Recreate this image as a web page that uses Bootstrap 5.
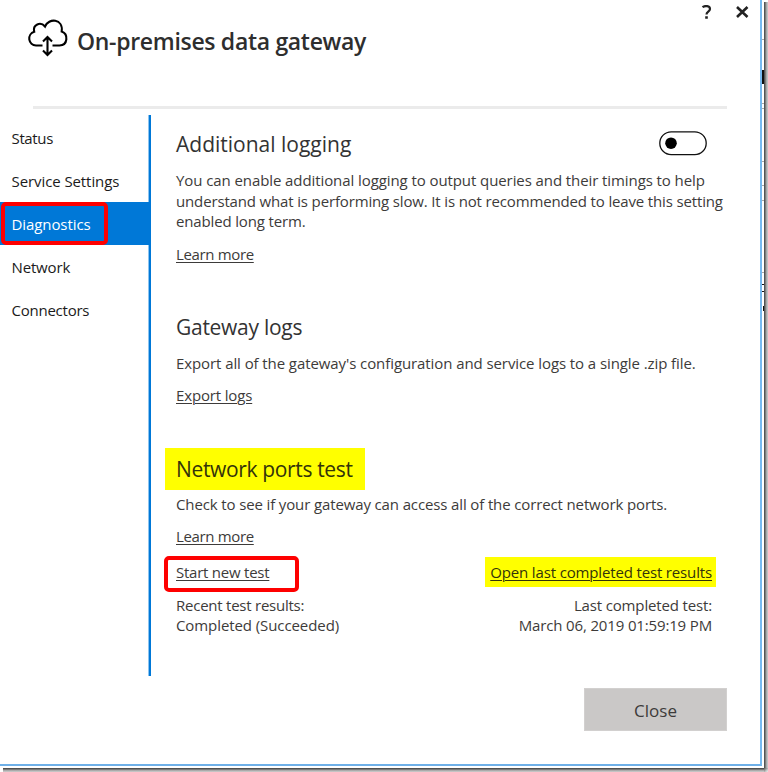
<!DOCTYPE html>
<html lang="en">
<head>
<meta charset="utf-8">
<meta name="viewport" content="width=device-width, initial-scale=1">
<title>On-premises data gateway</title>
<link href="https://cdn.jsdelivr.net/npm/bootstrap@5.3.0/dist/css/bootstrap.min.css" rel="stylesheet">
<style>
body{font-family:"Open Sans","Noto Sans",sans-serif;font-size:15px;line-height:20.7px;color:#3d3b3a;background:#fff;height:772px}
.gw-shell{width:768px;height:772px;display:grid;grid-template-columns:764px 4px;grid-template-rows:768px 4px}
.gw-window{width:762px;height:766px;border-right:2px solid #76b9f0;border-bottom:2px solid #6fb0e8}
.shade-right{margin-top:2px;background:linear-gradient(90deg,#4a4a4a 0,#5e5e5e 25%,#9c9c9c 50%,#b4b4b4 75%,#d0d0d0 100%)}
.shade-bottom{margin-left:3px;background:linear-gradient(#3c3c3c 0,#6a6a6a 30%,#a8a8a8 60%,#d0d0d0 100%)}
.shade-corner{background:linear-gradient(135deg,#555 0,#c4c4c4 60%,#eee 100%)}
.gw-head{height:106px}
.gw-logo{margin:17px 0 0 27px}
.gw-title{font-size:23px;font-weight:600;line-height:30px;letter-spacing:-.31px;margin:26px 0 0 8px;color:#2e2e2e}
.gw-tools{margin:5px 11px 0 0;gap:23px}
.gw-rule{height:2.5px;width:694px;margin-left:33px;background:#ebebeb}
.gw-main{margin-top:6.5px;height:561px}
.gw-side{width:151px;border-right:2px solid #0078d7;box-shadow:inset -1px 0 #8cc4f0;padding-top:1px}
.gw-side .nav-link{height:43px;padding:12px 0 0 11.5px;color:#1b1b1b;line-height:21px}
.gw-side .nav-link.active{background:#0078d7;color:#fff;position:relative}
.gw-side .active::after{content:"";position:absolute;left:1px;top:0;width:107px;height:43px;border:4px solid #fe0000;border-radius:5px}
.gw-body{width:551px;margin-left:25px;padding-top:14px}
.gw-h{font-size:21px;line-height:30px;height:30px;margin:0;color:#333;white-space:nowrap}
.gw-switch{margin:2px 20px 0 0}
.gw-text{margin:11px 0 0}
.gw-line{display:block;white-space:nowrap}
.gw-link{color:inherit;text-decoration:underline;text-decoration-thickness:1px;text-underline-offset:1.5px;white-space:nowrap}
.gw-row{margin-top:12px;height:21px}
.gw-export{margin-top:11px}
.gw-sect{margin-top:47px}
.gw-ports{margin-top:48px}
.gw-ports .gw-text{margin-top:10px}
.gw-ports .gw-row{margin-top:11px}
.hl{background:#ff0;color:#33330a}
.hl-head{padding:6px 11.5px;margin:-6px 0 -6px -11.5px;height:42px;width:200.5px}
.hl-link{padding:5px 4px 4px 5px;margin:-4px -4px -4px 0;height:30px}
.red-box{border:4px solid #fe0000;border-radius:5px;width:135px;height:36px;padding:2px 0 0 8px;margin:-5px 0 0 -12px}
.gw-results{width:536px}
.gw-actions{padding-top:14px;height:48px}
.gw-close{width:143px;height:43px;border:1px solid #d2d0cf;border-radius:0;background:#cac8c7;color:#3d3b3a;font-size:17px;padding:2px 0 0;margin:12px 33px 0 0}
.ls-0{letter-spacing:-.085px}.ls-c{letter-spacing:-.13px}.ls-1{letter-spacing:-.15px}.ls-2{letter-spacing:-.24px}.ls-3{letter-spacing:-.35px}.ls-g{letter-spacing:-.28px}
</style>
<script src="https://cdn.jsdelivr.net/npm/bootstrap@5.3.0/dist/js/bootstrap.bundle.min.js"></script>
</head>
<body class="overflow-hidden">
<div class="gw-shell">
  <div class="d-flex align-items-start">
    <div class="gw-window d-flex flex-column flex-shrink-0">
      <header class="gw-head d-flex align-items-start">
        <svg class="gw-logo" width="42" height="41" viewBox="0 0 42 41" fill="none" stroke="#000" stroke-width="2.1" aria-hidden="true">
          <path d="M15.500 28.500H9A7 7 0 0 1 7.200 14.800C5.500 7.500 13.500 4.200 18 9.500C21.500.7 36.500 1.500 34.700 14.500C41.500 17 41 28.500 32.500 28.500H25.500"/>
          <path d="M20.500 21V37M16 24.500L20.500 20L25 24.500M16 33.500L20.500 38L25 33.500"/>
        </svg>
        <h1 class="gw-title">On-premises data gateway</h1>
        <div class="gw-tools d-flex ms-auto">
          <svg width="11" height="15" viewBox="0 0 11 15" fill="none" stroke="#222" stroke-width="2.2" role="img" aria-label="Help"><path d="M1.500 2.200C4 .3 9 .7 9 4C9 6.700 5.500 6.700 5.500 9.500"/><path d="M4.200 12.500H6.800" stroke-width="2.500"/></svg>
          <svg width="14" height="15" viewBox="0 0 14 15" fill="none" stroke="#222" stroke-width="2.600" role="img" aria-label="Close window"><path d="M2 2L12.500 12M12.500 2L2 12"/></svg>
        </div>
      </header>
      <div class="gw-rule"></div>
      <main class="gw-main d-flex">
        <nav class="gw-side nav flex-column flex-nowrap">
          <a class="nav-link ls-3" href="#">Status</a>
          <a class="nav-link ls-0" href="#">Service Settings</a>
          <a class="nav-link active ls-0" href="#">Diagnostics</a>
          <a class="nav-link ls-1" href="#">Network</a>
          <a class="nav-link ls-2" href="#">Connectors</a>
        </nav>
        <div class="gw-body">
          <section>
            <div class="d-flex justify-content-between">
              <h2 class="gw-h">Additional logging</h2>
              <svg width="48" height="25" class="gw-switch" viewBox="0 0 48 25" role="switch" aria-checked="false"><rect x=".8" y=".8" width="46.400" height="22.800" rx="11.400" fill="#fff" stroke="#111" stroke-width="1.300"/><circle cx="12" cy="12.200" r="5.800"/></svg>
            </div>
            <p class="gw-text"><span class="gw-line ls-0">You can enable additional logging to output queries and their timings to help</span><span class="gw-line ls-1">understand what is performing slow. It is not recommended to leave this setting</span><span class="gw-line ls-1">enabled long term.</span></p>
            <div class="gw-row"><a class="gw-link ls-3" href="#">Learn more</a></div>
          </section>
          <section class="gw-sect">
            <h2 class="gw-h ls-g">Gateway logs</h2>
            <p class="gw-text gw-line ls-0">Export all of the gateway's configuration and service logs to a single .zip file.</p>
            <div class="gw-row gw-export"><a class="gw-link ls-1" href="#">Export logs</a></div>
          </section>
          <section class="gw-ports">
            <h2 class="gw-h hl hl-head ls-3">Network ports test</h2>
            <p class="gw-text gw-line ls-c">Check to see if your gateway can access all of the correct network ports.</p>
            <div class="gw-row"><a class="gw-link ls-3" href="#">Learn more</a></div>
            <div class="gw-results">
              <div class="gw-actions d-flex justify-content-between align-items-start">
                <div class="red-box"><a class="gw-link ls-2" href="#">Start new test</a></div>
                <div class="hl hl-link"><a class="gw-link ls-1" href="#">Open last completed test results</a></div>
              </div>
              <div class="d-flex justify-content-between">
                <div><span class="gw-line ls-2">Recent test results:</span><span class="gw-line ls-0">Completed (Succeeded)</span></div>
                <div class="text-end"><span class="gw-line ls-1">Last completed test:</span><span class="gw-line ls-1">March 06, 2019 01:59:19 PM</span></div>
              </div>
            </div>
          </section>
        </div>
      </main>
      <button type="button" class="btn gw-close align-self-end">Close</button>
    </div>
    <svg class="flex-shrink-0" width="2" height="766" viewBox="0 0 2 766" aria-hidden="true"><path fill="#111" d="M0 70h2v14H0zM0 284h2v1H0zM0 291h2v1H0zM1 306h1v5H1z"/><path fill="#aaa" d="M0 39h2v1H0zM0 103h2v1H0zM0 108h2v1H0zM0 161h2v1H0zM0 185h2v1H0zM0 200h2v1H0zM0 272h2v1H0z"/></svg>
  </div>
  <div class="shade-right"></div>
  <div class="shade-bottom"></div>
  <div class="shade-corner"></div>
</div>
</body>
</html>
